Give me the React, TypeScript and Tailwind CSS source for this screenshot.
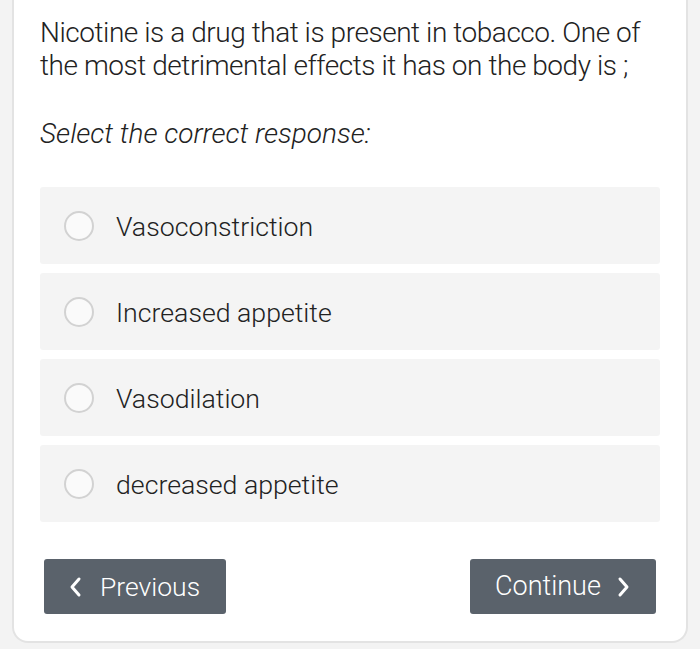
import React from "react";

const options = ["Vasoconstriction", "Increased appetite", "Vasodilation", "decreased appetite"];

function ChevronLeft() {
  return (
    <svg width="14" height="22" viewBox="0 0 14 22" fill="none">
      <path d="M11 3 L4 11 L11 19" stroke="white" strokeWidth="3" strokeLinecap="round" strokeLinejoin="round" />
    </svg>
  );
}
function ChevronRight() {
  return (
    <svg width="14" height="22" viewBox="0 0 14 22" fill="none">
      <path d="M3 3 L10 11 L3 19" stroke="white" strokeWidth="3" strokeLinecap="round" strokeLinejoin="round" />
    </svg>
  );
}

export default function App() {
  return (
    <div className="h-[649px] w-[700px] bg-[#f3f3f3] px-[12px] overflow-hidden" style={{ fontFamily: "Roboto, 'Liberation Sans', sans-serif" }}>
      <div className="h-[643px] bg-white border-x-2 border-b-2 border-[#e3e3e3] rounded-b-[16px] px-[26px] pt-[16px]">
        <p className="text-[28px] leading-[33px] font-light text-[#222] tracking-[-0.45px]">
          Nicotine is a drug that is present in tobacco. One of the most detrimental effects it has on the body is ;
        </p>
        <p className="mt-[35px] text-[28px] leading-[33px] font-light italic text-[#222]">Select the correct response:</p>
        <div className="mt-[37px] flex flex-col gap-[9px]">
          {options.map((o) => (
            <div key={o} className="h-[77px] bg-[#f4f4f4] rounded-[3px] flex items-center pl-[24px]">
              <span className="w-[30px] h-[30px] rounded-full border-2 border-[#d2d2d2] bg-[#fafafa]" />
              <span className="ml-[22px] pt-[3px] text-[26.7px] font-light text-[#222]">{o}</span>
            </div>
          ))}
        </div>
        <div className="mt-[37px] flex justify-between px-[4px]">
          <button className="w-[182px] h-[55px] bg-[#5a626b] rounded-[3px] flex items-center pl-[24px] gap-[18px] text-white text-[26.5px] font-light">
            <ChevronLeft />
            <span>Previous</span>
          </button>
          <button className="w-[186px] h-[55px] bg-[#5a626b] rounded-[3px] flex items-center pl-[25px] gap-[16px] text-white text-[27px] font-light">
            <span>Continue</span>
            <ChevronRight />
          </button>
        </div>
      </div>
    </div>
  );
}
